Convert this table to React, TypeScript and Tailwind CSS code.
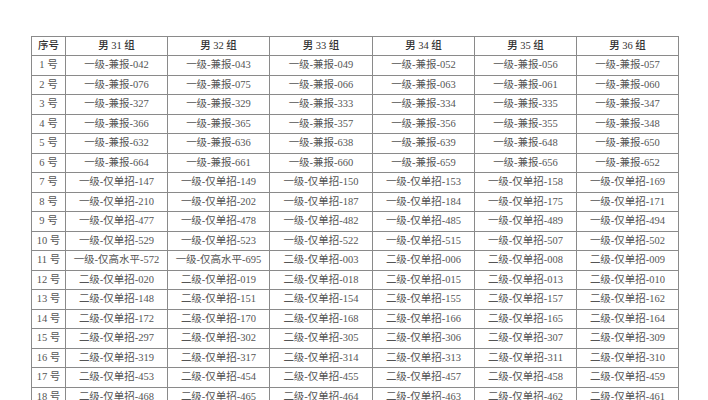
import React from "react";

const headers = ["男 31 组", "男 32 组", "男 33 组", "男 34 组", "男 35 组", "男 36 组"];

const J = "一级-兼报-";
const D1 = "一级-仅单招-";
const G = "一级-仅高水平-";
const D2 = "二级-仅单招-";

const rows: string[][] = [
  ["042", "043", "049", "052", "056", "057"].map((n) => J + n),
  ["076", "075", "066", "063", "061", "060"].map((n) => J + n),
  ["327", "329", "333", "334", "335", "347"].map((n) => J + n),
  ["366", "365", "357", "356", "355", "348"].map((n) => J + n),
  ["632", "636", "638", "639", "648", "650"].map((n) => J + n),
  ["664", "661", "660", "659", "656", "652"].map((n) => J + n),
  ["147", "149", "150", "153", "158", "169"].map((n) => D1 + n),
  ["210", "202", "187", "184", "175", "171"].map((n) => D1 + n),
  ["477", "478", "482", "485", "489", "494"].map((n) => D1 + n),
  ["529", "523", "522", "515", "507", "502"].map((n) => D1 + n),
  [G + "572", G + "695", D2 + "003", D2 + "006", D2 + "008", D2 + "009"],
  ["020", "019", "018", "015", "013", "010"].map((n) => D2 + n),
  ["148", "151", "154", "155", "157", "162"].map((n) => D2 + n),
  ["172", "170", "168", "166", "165", "164"].map((n) => D2 + n),
  ["297", "302", "305", "306", "307", "309"].map((n) => D2 + n),
  ["319", "317", "314", "313", "311", "310"].map((n) => D2 + n),
  ["453", "454", "455", "457", "458", "459"].map((n) => D2 + n),
  ["468", "465", "464", "463", "462", "461"].map((n) => D2 + n),
];

export default function App() {
  return (
    <div
      className="w-[708px] h-[400px] overflow-hidden bg-white pt-[36px] pl-[31px]"
      style={{ fontFamily: '"Liberation Serif", "Noto Sans CJK SC", serif' }}
    >
      <table className="border-collapse table-fixed w-[647px] text-[10.5px] text-[#555]">
        <colgroup>
          <col className="w-[34px]" />
          <col className="w-[102px]" />
          <col className="w-[102px]" />
          <col className="w-[103px]" />
          <col className="w-[102px]" />
          <col className="w-[102px]" />
          <col className="w-[102px]" />
        </colgroup>
        <thead>
          <tr className="h-[19px]">
            <th className="border border-[#8a8a8a] font-medium text-[#333] p-0 text-center">序号</th>
            {headers.map((h) => (
              <th key={h} className="border border-[#8a8a8a] font-medium text-[#333] p-0 text-center">
                {h}
              </th>
            ))}
          </tr>
        </thead>
        <tbody>
          {rows.map((r, i) => (
            <tr key={i} className="h-[19.5px]">
              <td className="border border-[#8a8a8a] p-0 text-center whitespace-nowrap">{i + 1} 号</td>
              {r.map((c, j) => (
                <td key={j} className="border border-[#8a8a8a] p-0 text-center whitespace-nowrap">
                  {c}
                </td>
              ))}
            </tr>
          ))}
        </tbody>
      </table>
    </div>
  );
}
